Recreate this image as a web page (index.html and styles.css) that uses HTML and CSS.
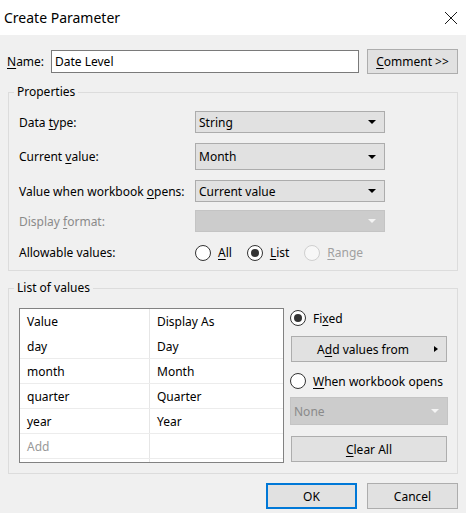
FILE: index.html
```html
<!DOCTYPE html>
<html lang="en">
<head>
<meta charset="utf-8">
<title>Create Parameter</title>
<link rel="stylesheet" href="styles.css">
</head>
<body>
<div class="window">
  <div class="titlebar">
    <span class="title">Create Parameter</span>
    <svg class="close" width="14" height="14" viewBox="0 0 14 14"><path d="M1 1 L13 13 M13 1 L1 13" stroke="#1a1a1a" stroke-width="1" fill="none"/></svg>
  </div>
  <div class="dialog">
    <div class="name-row">
      <span class="name-label"><u>N</u>ame:</span>
      <div class="textbox">Date Level</div>
      <button class="btn comment"><u>C</u>omment &gt;&gt;</button>
    </div>

    <fieldset class="group props">
      <legend>Properties</legend>
      <div class="props-body">
        <div class="prow r1">
          <span class="plabel">Data <u>t</u>ype:</span>
          <div class="combo"><span class="ctext">String</span><span class="carrow"></span></div>
        </div>
        <div class="prow r2">
          <span class="plabel">Current <u>v</u>alue:</span>
          <div class="combo tall"><span class="ctext">Month</span><span class="carrow"></span></div>
        </div>
        <div class="prow r3">
          <span class="plabel">Value when workbook <u>o</u>pens:</span>
          <div class="combo"><span class="ctext">Current value</span><span class="carrow"></span></div>
        </div>
        <div class="prow r4">
          <span class="plabel disabled">Display <u>f</u>ormat:</span>
          <div class="combo off"><span class="ctext"></span><span class="carrow"></span></div>
        </div>
        <div class="prow r5">
          <span class="plabel">Allowable values:</span>
          <div class="radios">
            <span class="radio"><span class="dot"></span><span><u>A</u>ll</span></span>
            <span class="radio"><span class="dot on"></span><span><u>L</u>ist</span></span>
            <span class="radio off"><span class="dot"></span><span><u>R</u>ange</span></span>
          </div>
        </div>
      </div>
    </fieldset>

    <fieldset class="group lov">
      <legend>List of values</legend>
      <div class="lov-body">
        <div class="grid">
          <div class="grow head"><span class="cell">Value</span><span class="cell">Display As</span></div>
          <div class="grow"><span class="cell">day</span><span class="cell">Day</span></div>
          <div class="grow"><span class="cell">month</span><span class="cell">Month</span></div>
          <div class="grow"><span class="cell">quarter</span><span class="cell">Quarter</span></div>
          <div class="grow"><span class="cell">year</span><span class="cell">Year</span></div>
          <div class="grow"><span class="cell add">Add</span><span class="cell"></span></div>
          <div class="grow filler"><span class="cell"></span><span class="cell"></span></div>
        </div>
        <div class="side">
          <span class="radio"><span class="dot on"></span><span>Fi<u>x</u>ed</span></span>
          <button class="btn addvals"><span class="btext">A<u>d</u>d values from</span><span class="rarrow"></span></button>
          <span class="radio when"><span class="dot"></span><span><u>W</u>hen workbook opens</span></span>
          <div class="combo off none"><span class="ctext">None</span><span class="carrow"></span></div>
          <button class="btn clear"><u>C</u>lear All</button>
        </div>
      </div>
    </fieldset>

    <div class="footer">
      <button class="btn ok">OK</button>
      <button class="btn cancel">Cancel</button>
    </div>
  </div>
</div>
</body>
</html>
```

FILE: styles.css
```css
* { box-sizing: border-box; }
html, body { margin: 0; padding: 0; }
body {
  width: 466px;
  height: 513px;
  overflow: hidden;
  background: #f0f0f0;
  font-family: "Noto Sans", "Open Sans", sans-serif;
  font-size: 12px;
  color: #000;
}
u { text-decoration: underline; text-underline-offset: 2px; text-decoration-thickness: 1px; }

.titlebar {
  height: 35px;
  background: #fff;
  display: flex;
  align-items: center;
  justify-content: space-between;
  padding: 0 8px 0 4px;
}
.title { font-size: 14px; }
.close { display: block; }

.dialog { padding: 14px 8px 0 8px; }

.name-row { display: flex; align-items: center; height: 25px; }
.name-label { width: 44px; margin-left: -1px; }
.textbox {
  flex: 1;
  height: 23px;
  background: #fff;
  border: 1px solid #7a7a7a;
  padding: 0 3px;
  line-height: 21px;
  margin-right: 8px;
}
.btn {
  font: inherit;
  color: #000;
  background: #e1e1e1;
  border: 1px solid #adadad;
  padding: 0;
  margin: 0;
}
.comment { width: 91px; height: 25px; }

.group {
  margin: 0;
  padding: 0;
  border: 1px solid #dcdcdc;
}
.group legend {
  margin-left: 5px;
  padding: 0 3px 0 3px;
  line-height: 16px;
}
.props { margin-top: 10px; }
.props-body { padding: 11px 10px 9px 10px; display: flex; flex-direction: column; }
.prow { display: flex; align-items: center; }
.r2 { margin-top: 10px; }
.r3 { margin-top: 10px; }
.r4 { margin-top: 8px; }
.r5 { margin-top: 12px; }
.plabel { width: 176px; }
.disabled { color: #8a8a8a; }

.combo {
  width: 190px;
  height: 22px;
  background: #e1e1e1;
  border: 1px solid #acacac;
  display: flex;
  align-items: center;
  padding: 0 8px 0 3px;
}
.combo.tall { height: 27px; }
.ctext { flex: 1; }
.carrow {
  width: 0; height: 0;
  border-left: 4px solid transparent;
  border-right: 4px solid transparent;
  border-top: 4px solid #000;
}
.combo.off { background: #cccccc; border-color: #c4c4c4; color: #8a8a8a; }
.combo.off .carrow { border-top-color: #f4f4f4; }

.radios { display: flex; align-items: center; gap: 15px; }
.radio { display: inline-flex; align-items: center; gap: 7px; height: 16px; }
.dot {
  width: 16px; height: 16px;
  border-radius: 50%;
  border: 1px solid #333;
  background: #fff;
  display: flex; align-items: center; justify-content: center;
}
.dot.on::after {
  content: "";
  width: 8px; height: 8px;
  border-radius: 50%;
  background: #333;
}
.radio.off { color: #a0a0a0; }
.radio.off .dot { border-color: #cfcfcf; background: #f7f7f7; }

.lov { margin-top: 9px; }
.lov-body { padding: 12px 9px 10px 10px; display: flex; align-items: flex-start; gap: 6px; }

.grid {
  flex: none;
  width: 265px;
  height: 155px;
  border: 1px solid #828282;
  background: #fff;
  display: flex;
  flex-direction: column;
}
.grow { display: flex; height: 25px; border-bottom: 1px solid #ececec; }
.grow.head { border-bottom: none; }
.grow.filler { flex: 1; border-bottom: none; height: auto; }
.cell { display: flex; align-items: center; padding-left: 7px; }
.cell:first-child { width: 130px; border-right: 1px solid #e6e6e6; }
.cell:last-child { flex: 1; }
.cell.add { color: #999; }

.side { flex: none; width: 158px; display: flex; flex-direction: column; padding-top: 2px; }
.side .btn { margin: 0 1px; width: 156px; height: 26px; }
.addvals { margin-top: 10px !important; display: flex; align-items: center; padding: 0 8px 0 0 !important; }
.btext { flex: 1; text-align: center; }
.rarrow {
  width: 0; height: 0;
  border-top: 3.5px solid transparent;
  border-bottom: 3.5px solid transparent;
  border-left: 4px solid #000;
}
.when { margin-top: 11px; }
.combo.none { width: 158px; height: 28px; margin-top: 8px; }
.clear { margin-top: 11px !important; }

.footer { display: flex; justify-content: flex-end; gap: 10px; margin-top: 9px; }
.ok, .cancel { width: 91px; height: 26px; }
.ok { border: 2px solid #0078d7; }
```
